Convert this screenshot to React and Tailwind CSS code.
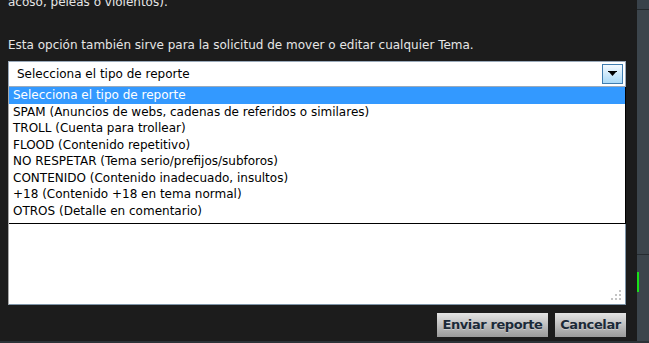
import React from "react";

const options = [
  "Selecciona el tipo de reporte",
  "SPAM (Anuncios de webs, cadenas de referidos o similares)",
  "TROLL (Cuenta para trollear)",
  "FLOOD (Contenido repetitivo)",
  "NO RESPETAR (Tema serio/prefijos/subforos)",
  "CONTENIDO (Contenido inadecuado, insultos)",
  "+18 (Contenido +18 en tema normal)",
  "OTROS (Detalle en comentario)",
];

function Grip() {
  return (
    <svg width="14" height="14" viewBox="0 0 14 14" className="absolute right-[2px] bottom-[2px]">
      <g fill="#c4c4c4">
        <rect x="10" y="2" width="2" height="2" />
        <rect x="6" y="6" width="2" height="2" />
        <rect x="10" y="6" width="2" height="2" />
        <rect x="2" y="10" width="2" height="2" />
        <rect x="6" y="10" width="2" height="2" />
        <rect x="10" y="10" width="2" height="2" />
      </g>
    </svg>
  );
}

export default function App() {
  return (
    <div
      className="w-[649px] h-[343px] overflow-hidden bg-[#1c1c1c] flex relative"
      style={{ fontFamily: '"DejaVu Sans", Verdana, sans-serif' }}
    >
      <div className="w-[637px] flex flex-col pl-[8px] pr-[11px]">
        <div className="text-[12px] leading-[16px] text-[#e6e6e6] -mt-[6px]">
          acoso, peleas o violentos).
        </div>
        <div className="text-[12px] leading-[16px] text-[#e6e6e6] mt-[27px]">
          Esta opción también sirve para la solicitud de mover o editar cualquier Tema.
        </div>
        <div className="mt-[8px] h-[26px] bg-white border border-[#9aaabb] flex items-center justify-between pl-[8px] pr-[2px]">
          <span className="text-[12px] text-black">Selecciona el tipo de reporte</span>
          <div className="w-[21px] h-[20px] border border-[#3f7db0] bg-gradient-to-b from-[#f4faff] to-[#a9d9f7] flex items-center justify-center">
            <svg width="9" height="6" viewBox="0 0 9 6">
              <rect x="0" y="0" width="9" height="1" fill="#000" />
              <polygon points="1,1 8,1 4.5,5" fill="#000" />
            </svg>
          </div>
        </div>
        <div className="relative h-[218px] bg-white border-l border-l-[#a8a8a8] border-r border-r-[#7f95a8] border-b border-b-[#7f95a8]">
          <div className="absolute left-0 top-0 right-[-1px] h-[137px] bg-white border-r border-r-black border-b border-b-black">
            {options.map((o, i) => (
              <div
                key={i}
                className={
                  "h-[16.5px] leading-[16.5px] pl-[4px] text-[12px] whitespace-nowrap " +
                  (i === 0 ? "bg-[#3399ff] text-white" : "text-black")
                }
              >
                {o}
              </div>
            ))}
          </div>
          <Grip />
        </div>
        <div className="mt-[8px] flex justify-end gap-[7px]">
          <button
            className="w-[111px] h-[24px] bg-gradient-to-b from-[#e4e4e4] to-[#9a9a9a] text-[13px] font-bold text-[#1b2a38] tracking-[-0.4px] flex items-center justify-center"
            style={{ textShadow: "0 1px 0 rgba(255,255,255,0.35)" }}
          >
            Enviar reporte
          </button>
          <button
            className="w-[71px] h-[24px] bg-gradient-to-b from-[#e4e4e4] to-[#9a9a9a] text-[13px] font-bold text-[#1b2a38] tracking-[-0.4px] flex items-center justify-center"
            style={{ textShadow: "0 1px 0 rgba(255,255,255,0.35)" }}
          >
            Cancelar
          </button>
        </div>
      </div>
      <div className="w-[12px] flex flex-col">
        <div className="h-[9px] bg-[#39424a]"></div>
        <div className="h-[1px] bg-[#22282c]"></div>
        <div className="h-[244px] bg-[#3c454c]"></div>
        <div className="h-[1px] bg-[#262c30]"></div>
        <div className="flex-1 bg-[#3c454c] relative">
          <div className="absolute left-0 top-[17px] w-[2px] h-[20px] bg-[#19e019]"></div>
        </div>
      </div>
      <div className="absolute left-0 right-0 bottom-0 h-[2px] bg-[#2c3338]"></div>
    </div>
  );
}
